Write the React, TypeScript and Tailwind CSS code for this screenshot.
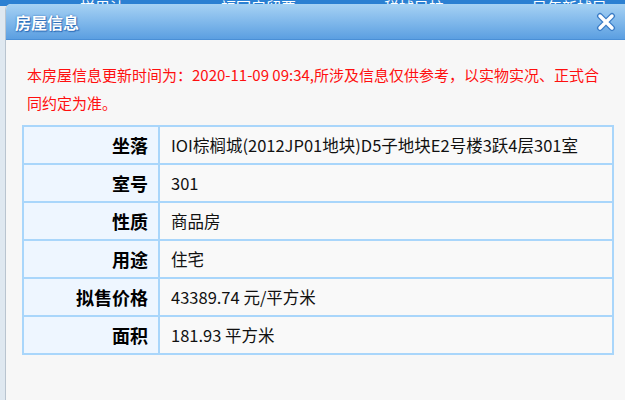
const rows = [
  { label: '坐落', value: 'IOI棕榈城(2012JP01地块)D5子地块E2号楼3跃4层301室' },
  { label: '室号', value: '301' },
  { label: '性质', value: '商品房' },
  { label: '用途', value: '住宅' },
  { label: '拟售价格', value: '43389.74 元/平方米' },
  { label: '面积', value: '181.93 平方米' },
];

export default function App() {
  return (
    <div
      className="relative w-[625px] h-[400px] overflow-hidden bg-[#dfe8f0]"
      style={{ fontFamily: '"Microsoft YaHei", "Noto Sans CJK SC", sans-serif' }}
    >
      {/* page nav behind the dialog */}
      <div className="h-[6px] bg-[#2b80d2] overflow-hidden flex items-end text-white text-[15px] leading-none">
        <span className="ml-[80px] -mb-[8px]">样里沽</span>
        <span className="ml-[96px] -mb-[8px]">福园房留要</span>
        <span className="ml-[88px] -mb-[8px]">税捕导护</span>
        <span className="ml-[88px] -mb-[8px]">异年新捕导</span>
      </div>

      {/* dialog */}
      <div className="absolute left-[5px] top-[4px] w-[640px] h-[420px] rounded-tl-[6px] bg-[#f7f7f7] border-l border-[#b9c4cf] overflow-hidden">
        <div className="h-[36px] flex items-center justify-between bg-gradient-to-b from-[#a6d2f4] to-[#5b9fe1] border-b border-[#4a8fd6]">
          <span
            className="ml-[9px] text-white font-bold text-[16px]"
            style={{ textShadow: '0 0 2px #2b6cb8, 1px 1px 1px #2b6cb8' }}
          >
            房屋信息
          </span>
          <svg width="20" height="20" viewBox="0 0 20 20" className="mr-[29px]">
            <path d="M4 4 L16 16 M16 4 L4 16" stroke="#3a7cc6" strokeWidth="6" strokeLinecap="round" />
            <path d="M4 4 L16 16 M16 4 L4 16" stroke="#ffffff" strokeWidth="3.4" strokeLinecap="round" />
          </svg>
        </div>

        <div className="pl-[16px] pt-[21px]">
          <p className="pl-[5px] text-[#ff0f0f] text-[15px] leading-[28px] w-[582px]">
            本房屋信息更新时间为：2020-11-09 09:34,所涉及信息仅供参考，以实物实况、正式合同约定为准。
          </p>

          <table className="mt-[8px] w-[592px] border-collapse border-2 border-[#a9d6fb] text-[16.5px] text-[#111]">
            <tbody>
              {rows.map((r) => (
                <tr key={r.label} className="h-[38px]">
                  <td className="w-[136px] border-2 border-[#a9d6fb] bg-[#eef6ff] text-right pr-[10px] font-bold text-[18px] text-black">
                    {r.label}
                  </td>
                  <td className="border-2 border-[#a9d6fb] bg-[#f9f9f9] pl-[11px]">{r.value}</td>
                </tr>
              ))}
            </tbody>
          </table>
        </div>
      </div>
    </div>
  );
}
